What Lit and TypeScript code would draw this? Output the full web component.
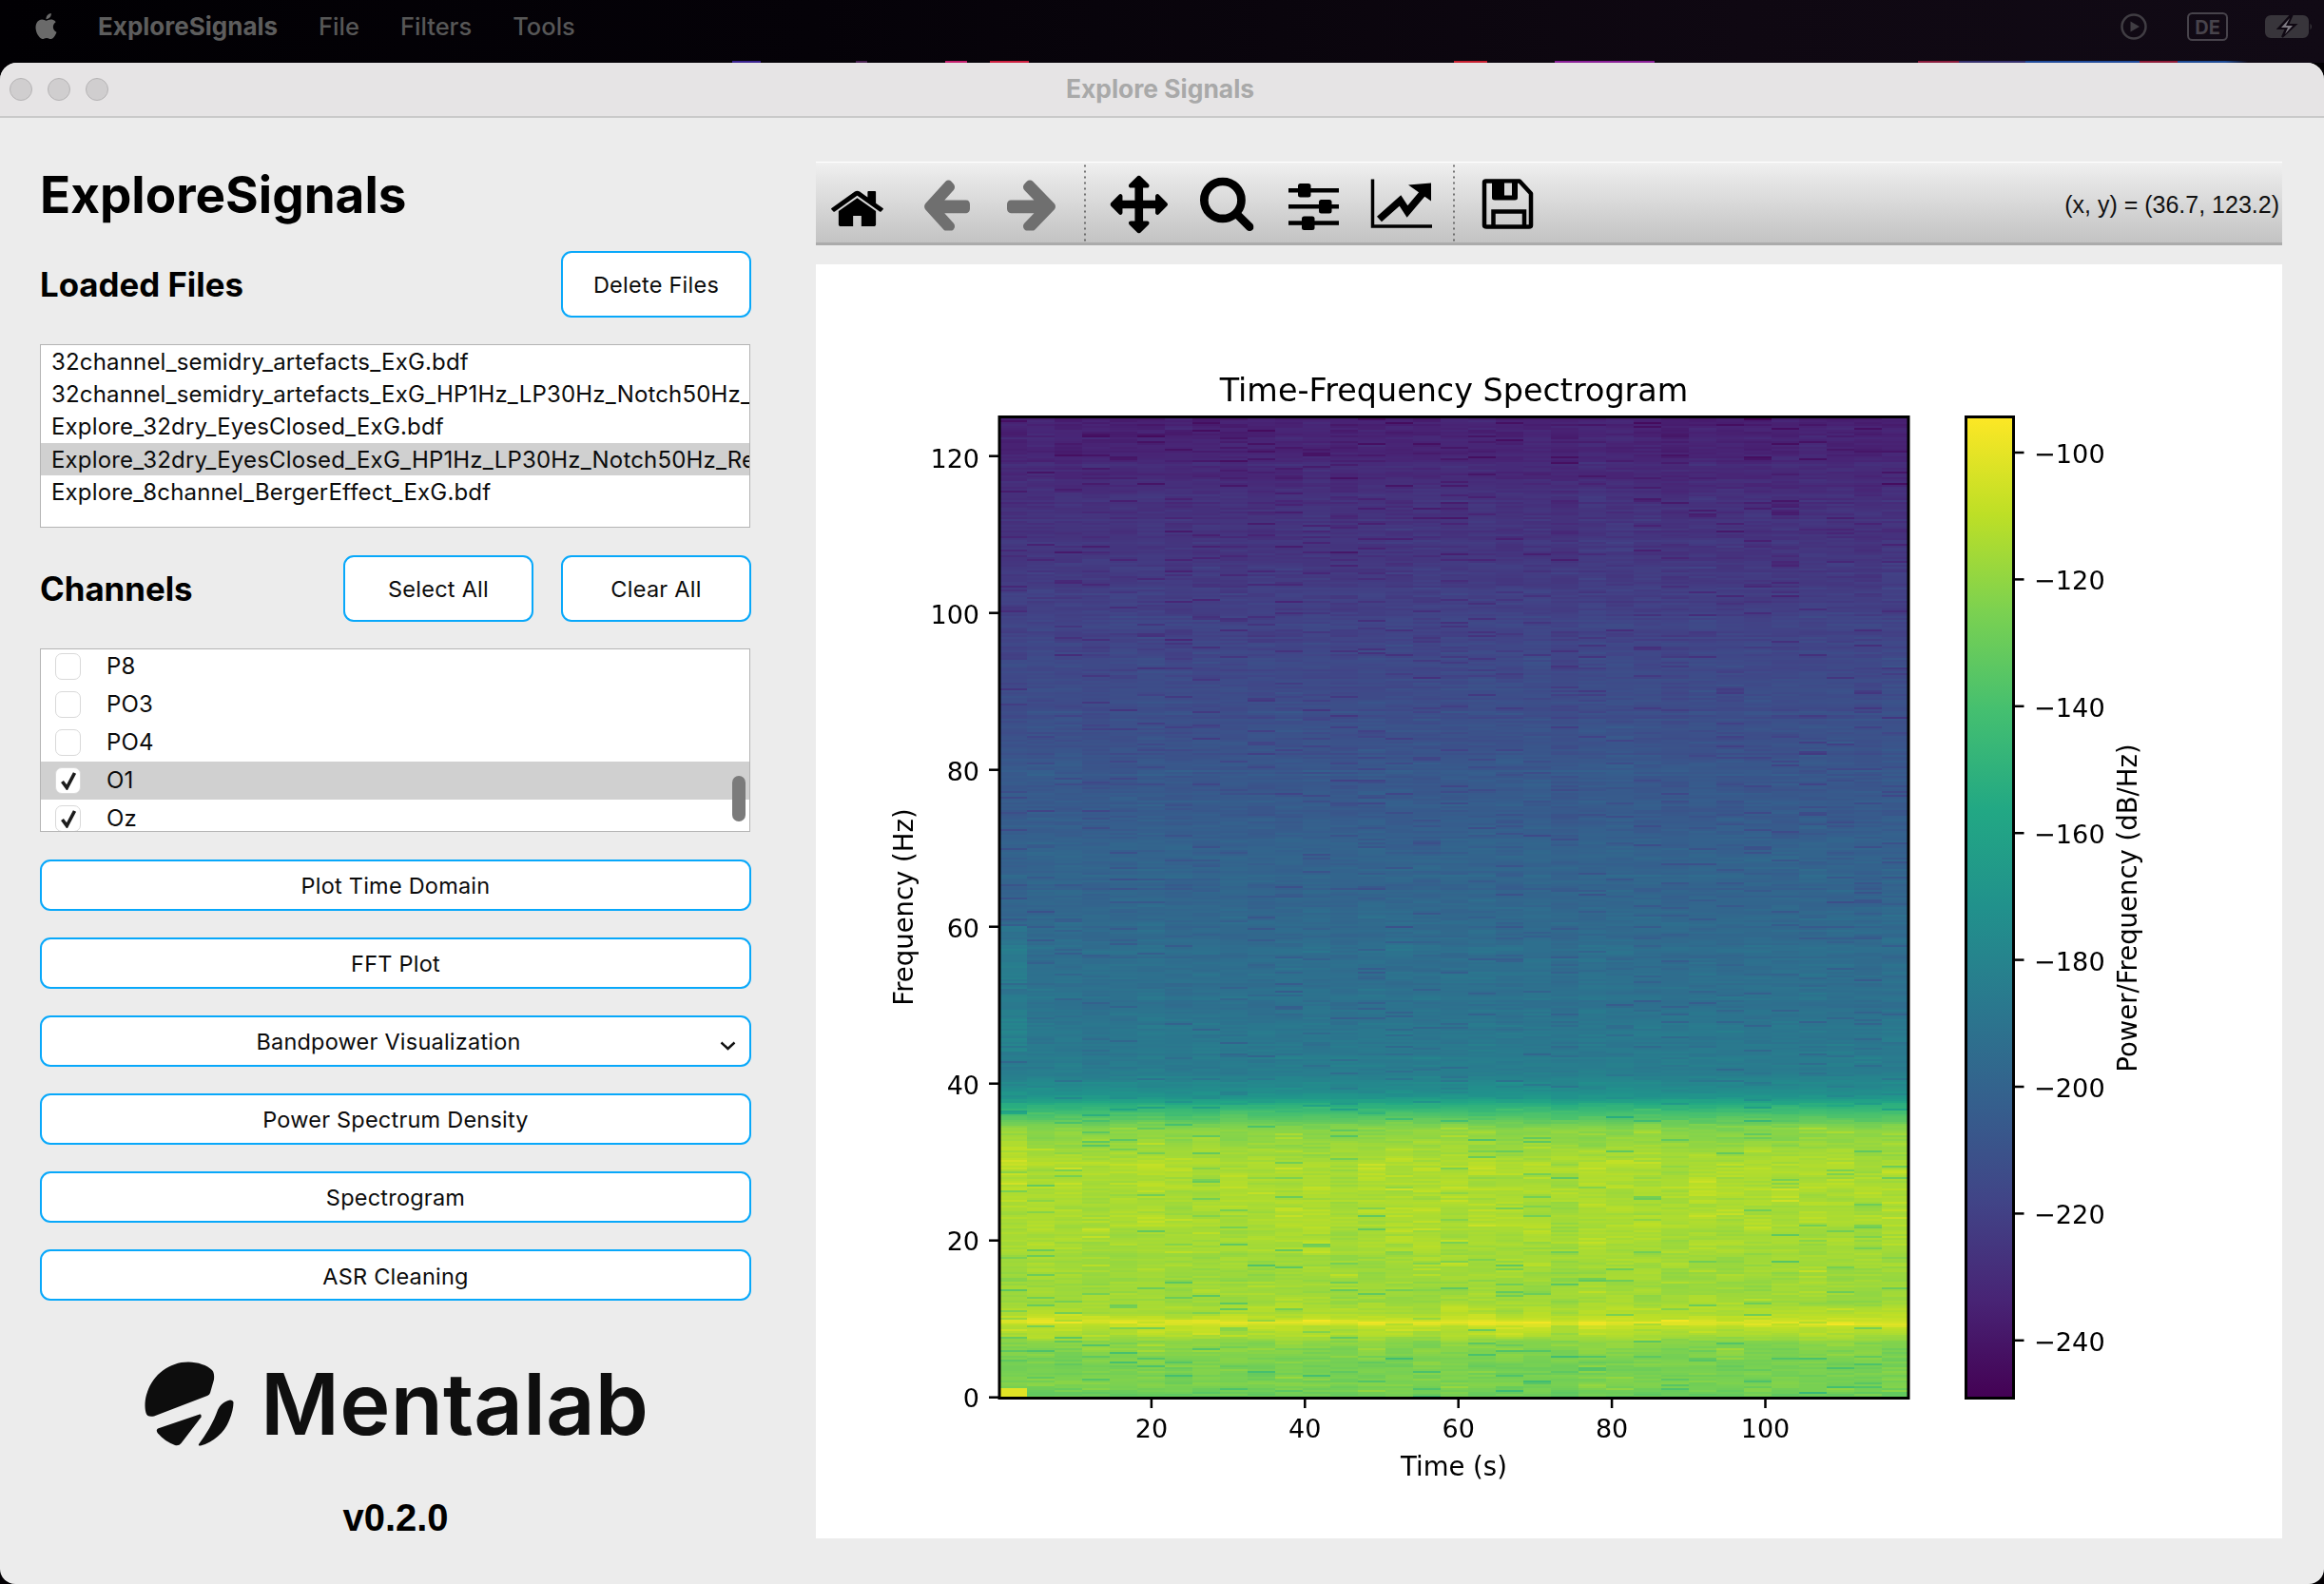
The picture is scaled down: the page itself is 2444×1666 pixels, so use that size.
import { LitElement, html, css, svg } from "lit";
import { customElement } from "lit/decorators.js";

const VIRIDIS = ["#440154","#482475","#414487","#355f8d","#2a788e","#21918c","#22a884","#44bf70","#7ad151","#bddf26","#fde725"];
const RGB = VIRIDIS.map((h) => [1, 3, 5].map((i) => parseInt(h.slice(i, i + 2), 16)));
function viridis(t: number) {
  const c = Math.max(0, Math.min(0.9999, t)) * 10;
  const i = Math.floor(c), f = c - i;
  return RGB[i].map((v, k) => v + (RGB[i + 1][k] - v) * f);
}
const PROFILE: [number, number][] = [
  [125, 0.095],[115, 0.13],[100, 0.19],[80, 0.27],[60, 0.345],[45, 0.4],[41, 0.43],[38.5, 0.5],[37.5, 0.6],[36, 0.72],[34, 0.825],[30, 0.875],[20, 0.87],[14, 0.85],[11, 0.87],[9.7, 0.91],[8, 0.87],[7, 0.82],[4, 0.79],[1.5, 0.8],[0, 0.76],
];
function profile(f: number) {
  for (let i = 0; i < PROFILE.length - 1; i++) {
    const [a, ta] = PROFILE[i], [b, tb] = PROFILE[i + 1];
    if (f <= a && f >= b) return tb + (ta - tb) * (f - b) / (a - b);
  }
  return 0.5;
}
function rng(seed: number) {
  let s = seed;
  return () => { s = (s * 1664525 + 1013904223) >>> 0; return s / 4294967296; };
}

const FILES = [
  "32channel_semidry_artefacts_ExG.bdf",
  "32channel_semidry_artefacts_ExG_HP1Hz_LP30Hz_Notch50Hz_Resampled.bdf",
  "Explore_32dry_EyesClosed_ExG.bdf",
  "Explore_32dry_EyesClosed_ExG_HP1Hz_LP30Hz_Notch50Hz_Resampled.bdf",
  "Explore_8channel_BergerEffect_ExG.bdf",
];
const CHANNELS = [
  { n: "P8", c: false, s: false },
  { n: "PO3", c: false, s: false },
  { n: "PO4", c: false, s: false },
  { n: "O1", c: true, s: true },
  { n: "Oz", c: true, s: false },
];
const ACTIONS = ["Plot Time Domain", "FFT Plot", "Bandpower Visualization", "Power Spectrum Density", "Spectrogram", "ASR Cleaning"];

const HOME = "M1472 992v480q0 26-19 45t-45 19h-384v-384h-256v384h-384q-26 0-45-19t-19-45v-480q0-1 .5-3t.5-3l575-474 575 474q1 2 1 6zm223-69l-62 74q-8 9-21 11h-3q-13 0-21-7l-692-577-692 577q-12 8-24 7-13-2-21-11l-62-74q-8-10-7-23.500t11-21.500l719-599q32-26 76-26t76 26l244 204v-195q0-14 9-23t23-9h192q14 0 23 9t9 23v408l219 182q10 8 11 21.500t-7 23.500z";
const LEFT = "M1664 896v128q0 53-32.500 90.500t-84.500 37.500h-704l293 294q38 36 38 90t-38 90l-75 76q-37 37-90 37-52 0-91-37l-651-652q-37-37-37-90 0-52 37-91l651-650q38-38 91-38 52 0 90 38l75 74q38 38 38 91t-38 91l-293 293h704q52 0 84.500 37.500t32.500 90.500z";
const RIGHT = "M1600 960q0 54-37 91l-651 651q-39 37-91 37-51 0-90-37l-75-75q-38-38-38-91t38-91l293-293h-704q-52 0-84.500-37.500t-32.500-90.500v-128q0-53 32.500-90.500t84.500-37.500h704l-293-294q-38-36-38-90t38-90l75-75q38-38 90-38 53 0 91 38l651 651q37 35 37 90z";
const MOVE = "M1792 896q0 26-19 45l-256 256q-19 19-45 19t-45-19-19-45v-128h-384v384h128q26 0 45 19t19 45-19 45l-256 256q-19 19-45 19t-45-19l-256-256q-19-19-19-45t19-45 45-19h128v-384h-384v128q0 26-19 45t-45 19-45-19l-256-256q-19-19-19-45t19-45l256-256q19-19 45-19t45 19 19 45v128h384v-384h-128q-26 0-45-19t-19-45 19-45l256-256q19-19 45-19t45 19l256 256q19 19 19 45t-19 45-45 19h-128v384h384v-128q0-26 19-45t45-19 45 19l256 256q19 19 19 45z";
const SEARCH = "M1216 832q0-185-131.500-316.500t-316.500-131.500-316.500 131.500-131.500 316.500 131.500 316.500 316.500 131.500 316.500-131.500 131.500-316.500zm512 832q0 52-38 90t-90 38q-54 0-90-38l-343-342q-179 124-399 124-143 0-273.500-55.500t-225-150-150-225-55.500-273.500 55.500-273.500 150-225 225-150 273.500-55.500 273.500 55.500 225 150 150 225 55.500 273.500q0 220-124 399l343 343q37 37 37 90z";

function faIcon(d: string, x: number, y: number, w: number, h: number, vb: string, fill = "#000") {
  return svg`<svg x=${x} y=${y} width=${w} height=${h} viewBox=${vb} preserveAspectRatio="none"><path d=${d} fill=${fill}></path></svg>`;
}

@customElement("app-root")
export class AppRoot extends LitElement {
  static styles = css`
    :host { display: block; width: 2444px; height: 1666px; overflow: hidden; background: #020003; font-family: Inter, "Liberation Sans", sans-serif; color: #0b0b0b; }
    .screen { width: 2444px; height: 1666px; display: flex; flex-direction: column; }
    .menubar { height: 66px; flex: none; display: flex; align-items: center; padding: 0 11px 12px 35px; box-sizing: border-box; background: linear-gradient(90deg, #010003 0%, #050208 35%, #0f0812 75%, #110a15 100%); position: relative; color: #575757; font-size: 25.5px; font-weight: 500; }
    .wallpaper { position: absolute; left: 0; right: 0; bottom: 0; height: 2px; background: linear-gradient(90deg, transparent 0 770px, #3a2390 770px 800px, transparent 800px 900px, #472050 900px 912px, transparent 912px 994px, #c4206e 994px 1017px, transparent 1017px 1041px, #cf2040 1041px 1082px, transparent 1082px 1529px, #c82030 1529px 1564px, transparent 1564px 1635px, #8a2098 1635px 1740px, transparent 1740px 2017px, #8a1b3c 2017px 2060px, #35306e 2060px 2130px, #1f4a9a 2130px 2250px, #8f1a38 2250px 2290px, #1d4a95 2290px 2340px, transparent 2364px); }
    .apple { width: 27px; height: 31px; fill: #6a6a6a; flex: none; }
    .m-app { margin-left: 41px; font-size: 26px; font-weight: 700; color: #5d5d5d; }
    .m-item { margin-left: 43px; }
    .m-right { margin-left: auto; display: flex; align-items: center; padding-top: 2px; }
    .st-play { width: 28px; height: 28px; }
    .st-de { width: 43px; height: 30px; margin-left: 42px; }
    .st-bat { width: 51px; height: 24px; margin-left: 39px; }

    .window { flex: 1; min-height: 0; background: #ececec; border-radius: 18px 18px 16px 16px; display: flex; flex-direction: column; overflow: hidden; }
    .titlebar { height: 56px; flex: none; box-sizing: content-box; background: #e6e4e5; border-bottom: 2px solid #c9c9c9; display: flex; align-items: center; position: relative; padding-left: 10px; }
    .light { width: 24px; height: 24px; border-radius: 50%; background: #d0cecf; border: 1px solid #b5b3b4; box-sizing: border-box; margin-right: 16px; }
    .wintitle { position: absolute; left: 0; right: 4px; top: 12px; line-height: 30px; text-align: center; font-size: 26.4px; font-weight: 700; color: #a9a9a9; }
    .body { flex: 1; min-height: 0; display: flex; }

    .side { width: 858px; flex: none; box-sizing: border-box; padding-left: 42px; padding-right: 68px; display: flex; flex-direction: column; }
    h1 { margin: 0; height: 140px; padding-top: 21px; box-sizing: border-box; display: flex; align-items: center; font-size: 53px; font-weight: 700; color: #000; }
    .row { display: flex; align-items: center; justify-content: space-between; height: 70px; }
    h2 { margin: 0; font-size: 34.8px; font-weight: 700; color: #000; }
    .btn { font: inherit; font-size: 23.5px; letter-spacing: 0.25px; color: #0b0b0b; background: #fff; border: 2.5px solid #08a8fa; border-radius: 11px; padding: 0; box-sizing: border-box; }
    .btn.small { width: 200px; height: 70px; padding-top: 1px; }
    .pair { display: flex; gap: 29px; }
    .listbox { width: 747px; height: 193px; background: #fff; border: 1.5px solid #b4b4b4; box-sizing: border-box; overflow: hidden; font-size: 24px; letter-spacing: 0.17px; position: relative; }
    .files { margin-top: 28px; }
    .chan-head { margin-top: 29px; }
    .file { height: 34.2px; line-height: 35.8px; padding-left: 11px; white-space: nowrap; overflow: hidden; }
    .file.sel { background: #d0d0d0; }
    .channels { margin-top: 28px; }
    .chan-scroll { margin-top: -2.5px; }
    .chan { height: 40px; display: flex; align-items: center; }
    .chan.sel { background: #d0d0d0; }
    .check { width: 27px; height: 28px; margin-left: 15px; box-sizing: border-box; background: #fff; border: 1.5px solid #d9d9d9; border-radius: 7px; flex: none; display: flex; align-items: center; justify-content: center; }
    .check svg { width: 20px; height: 20px; }
    .chan span { margin-left: 27px; }
    .scrollthumb { position: absolute; right: 4px; top: 133px; width: 14px; height: 48px; border-radius: 7px; background: #7b7b7b; }
    .actions { margin-top: 29px; display: flex; flex-direction: column; gap: 28.5px; }
    .btn.wide { width: 100%; height: 53.6px; position: relative; font-size: 23.5px; letter-spacing: 0.22px; padding-top: 1.5px; }
    .btn.combo { padding-right: 15px; }
    .chev { position: absolute; right: 14px; top: 25px; width: 17px; height: 10px; }
    .logo { margin-top: 52px; height: 110px; display: flex; align-items: center; padding-left: 98px; }
    .logo svg { width: 120px; height: 110px; flex: none; }
    .logo span { margin-left: 14px; font-size: 90px; font-weight: 600; letter-spacing: 0.2px; color: #0f0f0f; line-height: 1; padding-top: 4px; }
    .version { margin-top: 44px; text-align: center; font-family: "Liberation Sans", Arial, sans-serif; font-weight: 700; font-size: 40px; line-height: 44px; color: #000; }

    .main { width: 1542px; flex: none; padding-top: 46px; display: flex; flex-direction: column; }
    .toolbar { height: 87.5px; flex: none; box-sizing: border-box; background: linear-gradient(180deg, #f0f0f0 0%, #e6e6e6 20%, #c3c3c3 100%); border-top: 1.5px solid #fff; border-bottom: 3px solid #ababab; display: flex; align-items: center; justify-content: space-between; }
    .tools { width: 800px; height: 83px; flex: none; }
    .coords { font-family: "Liberation Sans", Arial, sans-serif; font-size: 25px; color: #111; padding: 5px 3px 0 0; }
    .figure { margin-top: 20px; width: 1542px; height: 1340px; background: #fff; position: relative; flex: none; }
    .heat { position: absolute; left: 193px; top: 160.5px; width: 956px; height: 1032px; }
    .plot { position: absolute; left: 0; top: 0; width: 1542px; height: 1340px; font-family: "DejaVu Sans", sans-serif; }
  `;

  firstUpdated() {
    const cv = this.renderRoot.querySelector("canvas") as HTMLCanvasElement;
    const ctx = cv.getContext("2d")!;
    const W = cv.width, H = cv.height;
    const img = ctx.createImageData(W, H);
    const rand = rng(20240117);
    const g = () => (rand() + rand() + rand() + rand() - 2) * 0.87;
    const colW = 29, rowH = 2;
    const cols = Math.ceil(W / colW), rows = Math.ceil(H / rowH);
    const rowBias: number[] = [];
    let band = 0;
    for (let r = 0; r < rows; r++) {
      if (r % 6 === 0) band = g();
      rowBias.push(band * 0.6 + g());
    }
    for (let c = 0; c < cols; c++) {
      const colBias = g() * 0.007;
      let slow = 0;
      for (let r = 0; r < rows; r++) {
        const f = 125 * (1 - (r + 0.5) / rows);
        if (r % 7 === 0) slow = g();
        const low = f < 37;
        let t = profile(f) + colBias;
        t += rowBias[r] * (low ? 0.01 : 0.014);
        t += slow * (low ? 0.014 : 0.009);
        t += g() * (low ? 0.02 : 0.018);
        const p = rand();
        if (low) {
          if (p < 0.05) t -= 0.05 + rand() * 0.06;
          else if (p < 0.09) t += 0.028;
        } else if (p < 0.07) t -= 0.035 + rand() * 0.035;
        const line = 9.75 - c * 0.012;
        const d = (f - line) / 0.32;
        t += 0.06 * Math.exp(-d * d);
        if (c === 0) {
          if (f < 1.1) t = 0.955;
          if (f > 44 && f < 60) t += 0.05;
          if (f > 24 && f < 36) t += 0.02;
        }
        const rgb = viridis(t);
        for (let y = r * rowH; y < Math.min(H, (r + 1) * rowH); y++) {
          for (let x = c * colW; x < Math.min(W, (c + 1) * colW); x++) {
            const o = (y * W + x) * 4;
            img.data[o] = rgb[0]; img.data[o + 1] = rgb[1]; img.data[o + 2] = rgb[2]; img.data[o + 3] = 255;
          }
        }
      }
    }
    ctx.putImageData(img, 0, 0);
  }

  private toolsSvg() {
    return html`<svg class="tools" viewBox="858 171.500 800 83">
      ${faIcon(HOME, 871, 194, 61, 52, "0 0 1792 1792")}
      ${faIcon(LEFT, 970, 188, 50, 55, "128 128 1536 1536", "#6f6f6f")}
      ${faIcon(RIGHT, 1059, 188, 51, 55, "128 128 1472 1536", "#6f6f6f")}
      <line x1="1141" y1="174" x2="1141" y2="254" stroke="#555" stroke-width="1.6" stroke-dasharray="2 4"></line>
      ${faIcon(MOVE, 1167.5, 185, 60.5, 61, "0 0 1792 1792")}
      ${faIcon(SEARCH, 1262, 187, 56.5, 56.5, "64 128 1664 1664")}
      <g>
        <rect x="1355" y="198.500" width="53" height="4.500"></rect>
        <rect x="1355" y="215.500" width="53" height="4.500"></rect>
        <rect x="1355" y="232.800" width="53" height="4.500"></rect>
        <rect x="1365" y="193.500" width="13.500" height="14.500" rx="2.500"></rect>
        <rect x="1387" y="210.500" width="13.500" height="14.500" rx="2.500"></rect>
        <rect x="1369" y="228" width="13.500" height="14.500" rx="2.500"></rect>
      </g>
      <g>
        <path d="M1443.500 189V238.500H1506" fill="none" stroke="#000" stroke-width="3.500"></path>
        <path d="M1450.500 231L1472.500 211.500L1480 223L1496 204" fill="none" stroke="#000" stroke-width="7.500"></path>
        <path d="M1481 195L1505 193V212Z" fill="#000"></path>
      </g>
      <line x1="1529" y1="174" x2="1529" y2="254" stroke="#555" stroke-width="1.6" stroke-dasharray="2 4"></line>
      <g>
        <path d="M1562.500 191H1598L1610 204V237.500Q1610 239 1608 239H1563.500Q1561 239 1561 237.500V192.500Q1561 191 1562.500 191Z" fill="none" stroke="#000" stroke-width="4.500" stroke-linejoin="round"></path>
        <path d="M1569 190H1596V208.500Q1596 211 1593 211H1572Q1569 211 1569 208.500Z" fill="#000"></path>
        <rect x="1582" y="193" width="8" height="13" fill="#d8d8d8"></rect>
        <path d="M1570.500 240V223H1603V240" fill="none" stroke="#000" stroke-width="4.500"></path>
      </g>
    </svg>`;
  }

  private plotSvg() {
    const yt = [0, 20, 40, 60, 80, 100, 120];
    const xt = [20, 40, 60, 80, 100];
    const cb = [100, 120, 140, 160, 180, 200, 220, 240];
    return html`<svg class="plot" viewBox="858 278 1542 1340">
      <defs>
        <linearGradient id="vir" x1="0" y1="1" x2="0" y2="0">
          ${VIRIDIS.map((c, i) => svg`<stop offset=${i / 10} stop-color=${c}></stop>`)}
        </linearGradient>
      </defs>
      <text x="1529" y="421.500" text-anchor="middle" font-size="33.400" fill="#000">Time-Frequency Spectrogram</text>
      <rect x="1051" y="438.500" width="956" height="1032" fill="none" stroke="#000" stroke-width="3"></rect>
      ${yt.map((v) => { const y = 1469.7 - v * 8.25; return svg`
        <line x1="1040" x2="1051" y1=${y} y2=${y} stroke="#000" stroke-width="2.500"></line>
        <text x="1030" y=${y + 10.5 + v * 0.012} text-anchor="end" font-size="27" fill="#000">${v}</text>`; })}
      ${xt.map((v) => { const x = 1049.5 + v * 8.07; return svg`
        <line x1=${x} x2=${x} y1="1470.500" y2="1481" stroke="#000" stroke-width="2.500"></line>
        <text x=${x} y="1511.500" text-anchor="middle" font-size="27" fill="#000">${v}</text>`; })}
      <text x="1529" y="1551.500" text-anchor="middle" font-size="27.500" fill="#000">Time (s)</text>
      <text transform="translate(960 954) rotate(-90)" text-anchor="middle" font-size="27.500" fill="#000">Frequency (Hz)</text>
      <rect x="2067.500" y="438.500" width="50" height="1032" fill="url(#vir)" stroke="#000" stroke-width="3"></rect>
      ${cb.map((v, i) => { const y = 476 + i * 133.4; return svg`
        <line x1="2118" x2="2128.500" y1=${y} y2=${y} stroke="#000" stroke-width="2.500"></line>
        <text x="2139" y=${y + 11} font-size="27.200" fill="#000">−${v}</text>`; })}
      <text transform="translate(2247 955) rotate(-90)" text-anchor="middle" font-size="27.500" fill="#000">Power/Frequency (dB/Hz)</text>
    </svg>`;
  }

  render() {
    return html`<div class="screen">
      <div class="menubar">
        <svg class="apple" viewBox="0 0 24 24"><path d="M12.152 6.896c-.948 0-2.415-1.078-3.96-1.04-2.04.027-3.91 1.183-4.961 3.014-2.117 3.675-.546 9.103 1.519 12.09 1.013 1.454 2.208 3.09 3.792 3.039 1.52-.065 2.09-.987 3.935-.987 1.831 0 2.35.987 3.96.948 1.637-.026 2.676-1.48 3.676-2.948 1.156-1.688 1.636-3.325 1.662-3.415-.039-.013-3.182-1.221-3.22-4.857-.026-3.04 2.48-4.494 2.597-4.559-1.429-2.09-3.623-2.324-4.39-2.376-2-.156-3.675 1.09-4.61 1.09zM15.53 3.83c.843-1.012 1.4-2.427 1.245-3.83-1.207.052-2.662.805-3.532 1.818-.78.896-1.454 2.338-1.273 3.714 1.338.104 2.715-.688 3.559-1.701"></path></svg>
        <span class="m-app">ExploreSignals</span>
        <span class="m-item">File</span>
        <span class="m-item">Filters</span>
        <span class="m-item">Tools</span>
        <div class="m-right">
          <svg class="st-play" viewBox="0 0 28 28"><circle cx="14" cy="14" r="12.500" fill="none" stroke="#403d43" stroke-width="2.500"></circle><path d="M10.500 8.500L20 14L10.500 19.500Z" fill="#403d43"></path></svg>
          <svg class="st-de" viewBox="0 0 43 30"><rect x="1" y="1" width="41" height="28" rx="4.500" fill="none" stroke="#47434b" stroke-width="2"></rect><text x="21.500" y="23" text-anchor="middle" font-family="Inter, sans-serif" font-size="20" font-weight="700" fill="#47434b">DE</text></svg>
          <svg class="st-bat" viewBox="0 0 51 24"><rect x="1" y="1" width="44" height="22" rx="5" fill="#38353b" stroke="#38353b" stroke-width="2"></rect><path d="M47.500 8.500Q50.500 12 47.500 15.500Z" fill="#38353b"></path><path d="M26 1L14 14H22L18 23L32 10H24L28 1Z" fill="#0f0812" stroke="#0f0812" stroke-width="2"></path><path d="M26 3L17 13H24L21 20L29 11H22Z" fill="#7e7a82"></path></svg>
        </div>
        <div class="wallpaper"></div>
      </div>
      <div class="window">
        <div class="titlebar">
          <div class="light"></div><div class="light"></div><div class="light"></div>
          <div class="wintitle">Explore Signals</div>
        </div>
        <div class="body">
          <div class="side">
            <h1>ExploreSignals</h1>
            <div class="row"><h2>Loaded Files</h2><button class="btn small">Delete Files</button></div>
            <div class="listbox files">
              ${FILES.map((f, i) => html`<div class="file ${i === 3 ? "sel" : ""}">${f}</div>`)}
            </div>
            <div class="row chan-head"><h2>Channels</h2><div class="pair"><button class="btn small">Select All</button><button class="btn small">Clear All</button></div></div>
            <div class="listbox channels">
              <div class="chan-scroll">
                ${CHANNELS.map((c) => html`<div class="chan ${c.s ? "sel" : ""}">
                  <div class="check">${c.c ? html`<svg viewBox="0 0 20 20"><path d="M3.500 11L8.300 17.500L16.500 2" fill="none" stroke="#1c1c1c" stroke-width="3.600"></path></svg>` : ""}</div>
                  <span>${c.n}</span></div>`)}
              </div>
              <div class="scrollthumb"></div>
            </div>
            <div class="actions">
              ${ACTIONS.map((a, i) => html`<button class="btn wide ${i === 2 ? "combo" : ""}">${a}${i === 2 ? html`<svg class="chev" viewBox="0 0 17 10"><path d="M1.500 1.500L8.500 8L15.500 1.500" fill="none" stroke="#111" stroke-width="2.400"></path></svg>` : ""}</button>`)}
            </div>
            <div class="logo">
              <svg viewBox="0 0 120 110" fill="#0d0d0d">
                <path d="M58 12.500C68 12.500 78 16 83 21C85 23 85.500 27 85 31L81 45Q80.500 47 78 48L22 69.500Q15 71 13.500 66C12 60 12 52 15 44C21 26 38 12.500 58 12.500Z"></path>
                <path d="M70 67.500L26 82.500Q23.500 84 26 87.500C31 93 37 97.500 44 100Q48 101 50.500 98L71.500 70.500Q72 67 70 67.500Z"></path>
                <path d="M102 52.500C97 53 91 58 89 63C85 75 76 90 69 99Q68 101 71 100.500C84 97 96 87 101 74C104 67 105.500 60 105.500 55Q105 52.500 102 52.500Z"></path>
              </svg>
              <span>Mentalab</span>
            </div>
            <div class="version">v0.2.0</div>
          </div>
          <div class="main">
            <div class="toolbar">
              ${this.toolsSvg()}
              <div class="coords">(x, y) = (36.7, 123.2)</div>
            </div>
            <div class="figure">
              <canvas class="heat" width="956" height="1032"></canvas>
              ${this.plotSvg()}
            </div>
          </div>
        </div>
      </div>
    </div>`;
  }
}
